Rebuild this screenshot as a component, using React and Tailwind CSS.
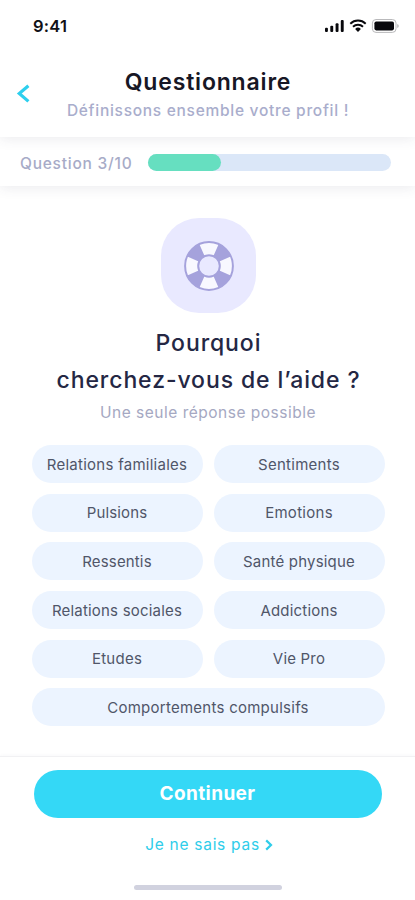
import React from "react";

const answers = [
  { label: "Relations familiales", track: "tracking-[0.26px]" },
  { label: "Sentiments", track: "tracking-[0.26px]" },
  { label: "Pulsions", track: "tracking-[0.15px]" },
  { label: "Emotions", track: "tracking-[0.28px]" },
  { label: "Ressentis", track: "tracking-[0.15px]" },
  { label: "Santé physique", track: "tracking-[0.2px]" },
  { label: "Relations sociales", track: "tracking-[0.2px]" },
  { label: "Addictions", track: "tracking-[0.2px]" },
  { label: "Etudes", track: "tracking-[0.25px]" },
  { label: "Vie Pro", track: "tracking-[0.2px]" },
  { label: "Comportements compulsifs", track: "tracking-[0.26px]", wide: true },
];

function StatusIcons() {
  return (
    <svg width="76" height="16" viewBox="0 0 76 16" className="block">
      <g fill="#08080c">
        <rect x="0" y="9.7" width="2.9" height="4.3" rx="1" />
        <rect x="5.3" y="7.7" width="2.9" height="6.3" rx="1" />
        <rect x="10.6" y="5.2" width="2.9" height="8.8" rx="1" />
        <rect x="15.8" y="2" width="2.9" height="12" rx="1" />
        <path d="M33 13.9l-2.9-2.9a4.2 4.2 0 0 1 5.8 0z" />
        <rect x="49.4" y="3.5" width="19.6" height="8.9" rx="1.8" />
      </g>
      <g fill="none" stroke="#08080c" strokeWidth="1.9">
        <path d="M25.3 5.7a11 11 0 0 1 15.4 0" />
        <path d="M28 8.8a7.2 7.2 0 0 1 10 0" />
      </g>
      <rect x="47.4" y="1.5" width="23.6" height="12.9" rx="3.6" fill="none" stroke="#b9b9bb" strokeWidth="1" />
      <path d="M72.4 6v4c1.6-.7 1.6-3.3 0-4z" fill="#a5a5a8" />
    </svg>
  );
}

function LifeBuoy() {
  return (
    <svg width="50" height="50" viewBox="0 0 50 50">
      <circle cx="25" cy="25" r="17.2" fill="none" stroke="#f8f8ff" strokeWidth="13" />
      <circle
        cx="25"
        cy="25"
        r="17.2"
        fill="none"
        stroke="#a5a2dc"
        strokeWidth="13"
        pathLength="360"
        strokeDasharray="42 48"
        strokeDashoffset="-24"
      />
      <circle cx="25" cy="25" r="23.9" fill="none" stroke="#a5a2dc" strokeWidth="2" />
      <circle cx="25" cy="25" r="10.8" fill="none" stroke="#a5a2dc" strokeWidth="2" />
    </svg>
  );
}

export default function App() {
  return (
    <div className="flex h-[900px] w-[415px] flex-col overflow-hidden bg-white font-['Inter','Liberation_Sans',sans-serif]">
      <header className="z-20 flex h-[137px] shrink-0 flex-col bg-white shadow-[0_2px_12px_rgba(60,60,90,0.10)]">
        <div className="flex h-[52px] items-center justify-between pr-[14px] pl-[33px]">
          <span className="text-[16.5px] font-semibold tracking-[0.2px] text-[#111116]">9:41</span>
          <StatusIcons />
        </div>
        <div className="flex pt-[14px]">
          <button className="flex w-[42px] items-start pt-[18px] pl-4" aria-label="Retour">
            <svg width="14" height="20" viewBox="0 0 14 20" fill="none" stroke="#2dcfee" strokeWidth="3.2">
              <path d="M12.4 1.8L3.3 9.5l9.1 7.9" />
            </svg>
          </button>
          <div className="flex w-[332px] flex-col items-center">
            <h1 className="text-[23px] leading-8 font-semibold tracking-[0.82px] whitespace-nowrap text-[#171725]">
              Questionnaire
            </h1>
            <p className="pt-px text-[15.5px] leading-6 font-medium tracking-[0.72px] whitespace-nowrap text-[#a9adcc]">
              Définissons ensemble votre profil !
            </p>
          </div>
        </div>
      </header>

      <section className="z-10 flex h-[49px] shrink-0 items-center bg-white pt-[2px] pl-5 shadow-[0_2px_12px_rgba(60,60,90,0.10)]">
        <span className="w-[128px] pt-[2px] text-[15.5px] font-medium tracking-[0.76px] whitespace-nowrap text-[#a7abc7]">
          Question 3/10
        </span>
        <div className="h-[17px] w-[243px] rounded-full bg-[#dbe7f8]">
          <div className="h-full w-[73px] rounded-full bg-[#66dfc0]" />
        </div>
      </section>

      <main className="flex flex-1 flex-col items-center pt-8 pl-[2px]">
        <div className="flex size-[95px] items-center justify-center rounded-[38px] bg-[#e9e9ff]">
          <LifeBuoy />
        </div>
        <h2 className="mt-[12px] flex flex-col items-center text-[23px] leading-[37px] font-medium whitespace-nowrap text-[#242744]">
          <span className="tracking-[0.9px]">Pourquoi</span>
          <span className="tracking-[0.9px]">cherchez-vous de l’aide ?</span>
        </h2>
        <p className="mt-[2px] pr-px text-[15.5px] leading-6 tracking-[0.5px] whitespace-nowrap text-[#a5a8c2]">
          Une seule réponse possible
        </p>
        <div className="mt-[20px] grid w-[353px] grid-cols-2 gap-x-[11px] gap-y-[10.7px]">
          {answers.map((a) => (
            <button
              key={a.label}
              className={`flex h-[38px] items-center justify-center rounded-full bg-[#ecf4ff] pt-[1.5px] pr-px text-[15px] whitespace-nowrap text-[#505669] ${a.track} ${a.wide ? "col-span-2" : ""}`}
            >
              {a.label}
            </button>
          ))}
        </div>
      </main>

      <footer className="flex h-[144px] shrink-0 flex-col items-center border-t border-[#f1f1f3] bg-white pt-[13px] shadow-[0_0_4px_rgba(60,60,90,0.05)]">
        <button className="h-[48px] w-[348px] rounded-full bg-[#34d8f6] pt-px text-[19px] font-bold tracking-[0.4px] text-white">
          Continuer
        </button>
        <button className="mt-[14px] flex h-6 items-center gap-[5px] pt-px pl-[3px] text-[15.5px] tracking-[0.72px] whitespace-nowrap text-[#2fcdea]">
          Je ne sais pas
          <svg width="8" height="12" viewBox="0 0 8 12" fill="none" stroke="#2fcdea" strokeWidth="2.2">
            <path d="M1.2 1.4L6 6l-4.8 4.6" />
          </svg>
        </button>
        <div className="mt-[29px] h-[5px] w-[148px] rounded-full bg-[#d1d2df]" />
      </footer>
    </div>
  );
}
